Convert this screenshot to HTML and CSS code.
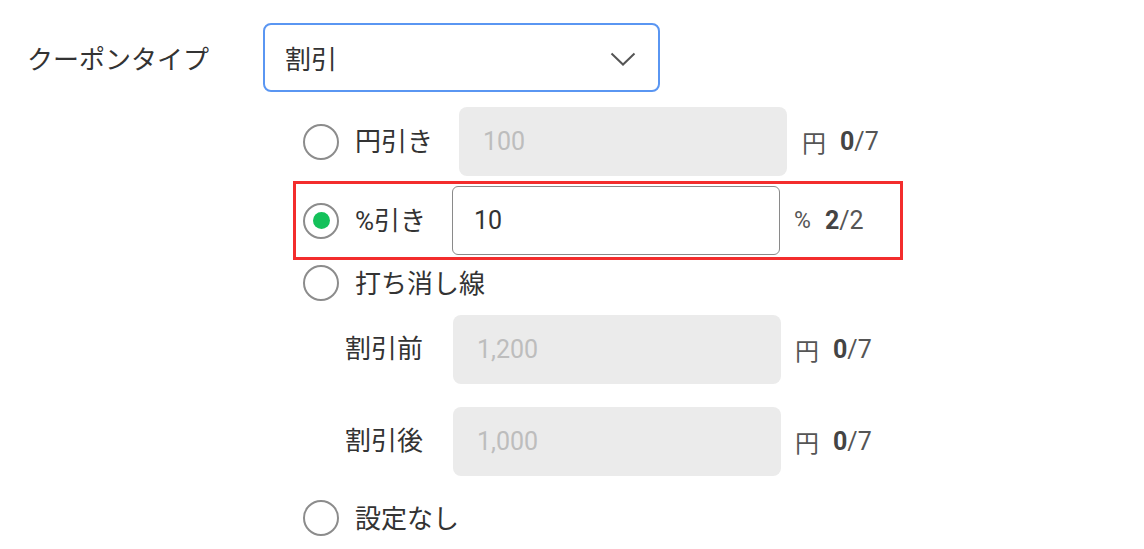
FILE: index.html
```html
<!DOCTYPE html>
<html lang="ja">
<head>
<meta charset="utf-8">
<title>クーポンタイプ</title>
<link rel="stylesheet" href="styles.css">
</head>
<body>
<div class="page">
  <div class="form-row">
    <div class="form-label">クーポンタイプ</div>
    <div class="form-field">
      <div class="select">
        <span class="select-value">割引</span>
        <svg class="chevron" width="26" height="14" viewBox="0 0 26 14"><path d="M1.5 1.5 L13 12.5 L24.5 1.5" fill="none" stroke="#555" stroke-width="2"/></svg>
      </div>
      <div class="options">
        <div class="option">
          <span class="radio"></span>
          <span class="opt-label">円引き</span>
          <div class="input disabled">100</div>
          <span class="unit">円</span>
          <span class="count"><b>0</b>/7</span>
        </div>
        <div class="option highlighted">
          <span class="radio checked"></span>
          <span class="opt-label">%引き</span>
          <div class="input active">10</div>
          <span class="unit unit-pct">%</span>
          <span class="count"><b>2</b>/2</span>
        </div>
        <div class="option">
          <span class="radio"></span>
          <span class="opt-label">打ち消し線</span>
        </div>
        <div class="sub-options">
          <div class="sub-option">
            <span class="sub-label">割引前</span>
            <div class="input disabled">1,200</div>
            <span class="unit">円</span>
            <span class="count"><b>0</b>/7</span>
          </div>
          <div class="sub-option">
            <span class="sub-label">割引後</span>
            <div class="input disabled">1,000</div>
            <span class="unit">円</span>
            <span class="count"><b>0</b>/7</span>
          </div>
        </div>
        <div class="option">
          <span class="radio"></span>
          <span class="opt-label">設定なし</span>
        </div>
      </div>
    </div>
  </div>
</div>
</body>
</html>
```

FILE: styles.css
```css
* { box-sizing: border-box; }
html, body { margin: 0; padding: 0; background: #fff; }
body {
  font-family: Roboto, "Noto Sans CJK JP", sans-serif;
  color: #333;
}
.page { padding: 23px 0 0 27px; }
.form-row { display: flex; align-items: flex-start; }
.form-label {
  width: 236px;
  height: 69px;
  display: flex;
  align-items: center;
  font-size: 26px;
  color: #333;
}
.form-field { display: flex; flex-direction: column; }
.select {
  width: 397px;
  height: 69px;
  border: 2px solid #5a96f2;
  border-radius: 8px;
  display: flex;
  align-items: center;
  justify-content: space-between;
  padding: 0 22px 0 20px;
  font-size: 26px;
  color: #333;
}
.chevron { display: block; margin-top: 2px; }
.options {
  margin-top: 10px;
  margin-left: 30px;
  display: flex;
  flex-direction: column;
}
.option {
  width: 610px;
  display: flex;
  align-items: center;
  border: 3px solid transparent;
  padding: 2px 0 2px 7px;
}
.option.highlighted { border-color: #f32d2d; }
.radio {
  width: 36px;
  height: 36px;
  border: 2px solid #8c8c8c;
  border-radius: 50%;
  flex: none;
  display: flex;
  align-items: center;
  justify-content: center;
}
.radio.checked::after {
  content: "";
  width: 17px;
  height: 17px;
  border-radius: 50%;
  background: #14c15a;
}
.opt-label {
  margin-left: 16px;
  font-size: 26px;
  color: #333;
  margin-top: -4px;
}
.input {
  width: 328px;
  height: 69px;
  margin-left: 26px;
  border-radius: 8px;
  display: flex;
  align-items: center;
  font-size: 25px;
  flex: none;
}
.input.disabled {
  background: #ebebeb;
  color: #bdbdbd;
  padding-left: 24px;
}
.input.active {
  background: #fff;
  border: 1.5px solid #8a8a8a;
  border-radius: 6px;
  color: #333;
  padding-left: 21px;
}
.unit {
  margin-left: 15px;
  font-size: 24px;
  color: #555;
}
.unit-pct { margin-left: 14px; font-size: 23px; }
.count {
  margin-left: 14px;
  font-size: 25px;
  color: #555;
}
.count b { font-weight: 700; color: #444; }
.sub-options {
  margin-top: 9px;
  margin-bottom: 19px;
  display: flex;
  flex-direction: column;
  gap: 23px;
}
.sub-option {
  display: flex;
  align-items: center;
  padding-left: 52px;
}
.sub-option .sub-label {
  width: 108px;
  font-size: 26px;
  color: #333;
  margin-top: -6px;
}
.sub-option .input { margin-left: 0; }
.sub-option .unit { margin-left: 14px; }
```
